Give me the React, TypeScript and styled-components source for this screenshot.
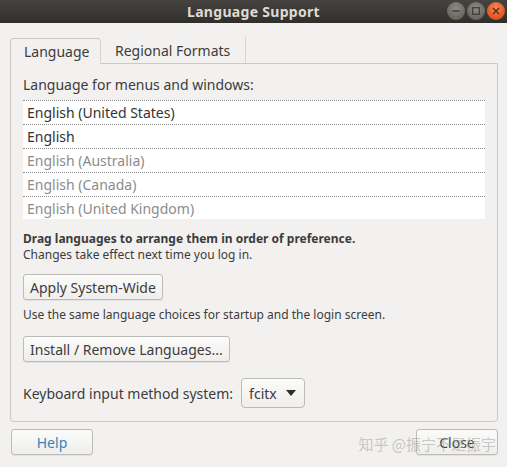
import styled, { createGlobalStyle } from "styled-components";

const GlobalStyle = createGlobalStyle`
  html, body {
    margin: 0;
    padding: 0;
    background: #f2f1f0;
  }
  body {
    font-family: "Noto Sans", "Open Sans", "DejaVu Sans", sans-serif;
    color: #3c3c3c;
  }
`;

const languages = [
  { name: "English (United States)", active: true },
  { name: "English", active: true },
  { name: "English (Australia)", active: false },
  { name: "English (Canada)", active: false },
  { name: "English (United Kingdom)", active: false },
];

export default function App() {
  return (
    <>
      <GlobalStyle />
      <Window>
        <TitleBar>
          <Title>Language Support</Title>
          <WindowControls>
            <ControlButton>
              <svg width="8" height="8" viewBox="0 0 8 8">
                <path d="M0.5 4h7" stroke="#3b3a36" strokeWidth="1.4" />
              </svg>
            </ControlButton>
            <ControlButton>
              <svg width="8" height="8" viewBox="0 0 8 8">
                <rect x="0.7" y="0.7" width="6.6" height="6.6" fill="none" stroke="#3b3a36" strokeWidth="1.2" />
              </svg>
            </ControlButton>
            <ControlButton close>
              <svg width="8" height="8" viewBox="0 0 8 8">
                <path d="M1 1l6 6M7 1l-6 6" stroke="#5a2a14" strokeWidth="1.4" />
              </svg>
            </ControlButton>
          </WindowControls>
        </TitleBar>

        <Content>
          <Tabs>
            <Tab active>Language</Tab>
            <Tab>Regional Formats</Tab>
          </Tabs>
          <Panel>
            <Heading>Language for menus and windows:</Heading>
            <LanguageList>
              {languages.map((lang) => (
                <LanguageRow key={lang.name} active={lang.active}>
                  {lang.name}
                </LanguageRow>
              ))}
            </LanguageList>

            <Hint>
              <strong>Drag languages to arrange them in order of preference.</strong>
              <br />
              Changes take effect next time you log in.
            </Hint>

            <Button>Apply System-Wide</Button>
            <Note>Use the same language choices for startup and the login screen.</Note>

            <Button>Install / Remove Languages...</Button>

            <InputMethodRow>
              <span>Keyboard input method system:</span>
              <Combo>
                fcitx
                <svg width="10" height="6" viewBox="0 0 10 6">
                  <path d="M0 0h10L5 6z" fill="#2e2e2e" />
                </svg>
              </Combo>
            </InputMethodRow>
          </Panel>

          <Footer>
            <Button wide help>Help</Button>
            <CloseWrap>
              <Button wide>Close</Button>
              <Watermark>知乎 @振宁不是振宇</Watermark>
            </CloseWrap>
          </Footer>
        </Content>
      </Window>
    </>
  );
}

const Window = styled.div`
  width: 507px;
  height: 467px;
  background: #f2f1f0;
  overflow: hidden;
`;

const TitleBar = styled.div`
  position: relative;
  height: 23px;
  background: linear-gradient(#44433f, #393834 60%, #2f2e2a);
  display: flex;
  align-items: center;
  justify-content: center;
`;

const Title = styled.div`
  font-family: "Noto Sans", "DejaVu Sans", sans-serif;
  font-weight: 700;
  font-size: 14px;
  color: #dfdbd2;
  letter-spacing: 0.3px;
`;

const WindowControls = styled.div`
  position: absolute;
  right: 2px;
  top: 2px;
  display: flex;
  gap: 2px;
`;

const ControlButton = styled.div<{ close?: boolean }>`
  width: 18px;
  height: 18px;
  border-radius: 50%;
  display: flex;
  align-items: center;
  justify-content: center;
  background: ${(p) =>
    p.close
      ? "radial-gradient(circle at 50% 35%, #f58a5a, #e2531e 70%)"
      : "radial-gradient(circle at 50% 35%, #8c8b86, #67665f 70%)"};
`;

const Content = styled.div`
  padding: 14px 9px 0 10px;
`;

const Tabs = styled.div`
  display: flex;
  align-items: flex-end;
  height: 26px;
`;

const Tab = styled.div<{ active?: boolean }>`
  height: 26px;
  box-sizing: border-box;
  padding: 0 13px 0 ${(p) => (p.active ? "13px" : "14px")};
  display: flex;
  align-items: center;
  font-size: 14px;
  color: #3c3c3c;
  background: ${(p) => (p.active ? "#f2f1f0" : "transparent")};
  border: ${(p) => (p.active ? "1px solid #c9c7c3" : "none")};
  border-right: 1px solid #d6d4d0;
  border-bottom: none;
  border-radius: ${(p) => (p.active ? "4px 4px 0 0" : "0")};
  width: ${(p) => (p.active ? "91px" : "145px")};
  margin-bottom: ${(p) => (p.active ? "-1px" : "0")};
  position: relative;
  z-index: 1;
`;

const Panel = styled.div`
  border: 1px solid #cbc9c5;
  border-radius: 0 0 4px 4px;
  height: 359px;
  box-sizing: border-box;
  padding: 12px 12px 0 12px;
  display: flex;
  flex-direction: column;
  align-items: flex-start;
`;

const Heading = styled.div`
  font-size: 14px;
  line-height: 18px;
  margin-bottom: 6px;
`;

const LanguageList = styled.div`
  align-self: stretch;
  background: #ffffff;
  border-top: 1px dotted #8e8e8e;
  margin-bottom: 12px;
`;

const LanguageRow = styled.div<{ active: boolean }>`
  height: 23px;
  line-height: 23px;
  padding-left: 4px;
  font-size: 14px;
  color: ${(p) => (p.active ? "#333333" : "#8c8c8c")};
  border-bottom: 1px dotted #8e8e8e;
  &:last-child {
    border-bottom: none;
    height: 22px;
  }
`;

const Hint = styled.div`
  font-size: 12px;
  line-height: 16px;
  color: #3c3c3c;
  margin-bottom: 11px;
  strong {
    font-weight: 700;
  }
`;

const Button = styled.div<{ wide?: boolean; help?: boolean }>`
  height: 26px;
  box-sizing: border-box;
  border: 1px solid #bdbbb7;
  border-radius: 3px;
  background: linear-gradient(#fbfbfa, #efeeec);
  box-shadow: 0 1px 0 rgba(0, 0, 0, 0.06);
  display: flex;
  align-items: center;
  justify-content: center;
  padding: 0 6px;
  font-size: 14px;
  color: ${(p) => (p.help ? "#3584b8" : "#3c3c3c")};
  width: ${(p) => (p.wide ? "82px" : "auto")};
`;

const Note = styled.div`
  font-size: 12px;
  line-height: 16px;
  margin: 7px 0 13px;
`;

const InputMethodRow = styled.div`
  display: flex;
  align-items: center;
  gap: 8px;
  margin-top: 16px;
  font-size: 14px;
`;

const Combo = styled.div`
  height: 30px;
  box-sizing: border-box;
  border: 1px solid #bdbbb7;
  border-radius: 4px;
  background: linear-gradient(#fbfbfa, #efeeec);
  display: flex;
  align-items: center;
  gap: 9px;
  padding: 0 8px 0 7px;
  font-size: 14px;
`;

const Footer = styled.div`
  display: flex;
  justify-content: space-between;
  margin-top: 7px;
  padding-left: 1px;
`;

const CloseWrap = styled.div`
  position: relative;
`;

const Watermark = styled.div`
  position: absolute;
  right: 2px;
  top: 4px;
  font-family: "Noto Sans CJK SC", sans-serif;
  font-size: 15px;
  white-space: nowrap;
  color: rgba(160, 160, 160, 0.55);
  pointer-events: none;
`;
